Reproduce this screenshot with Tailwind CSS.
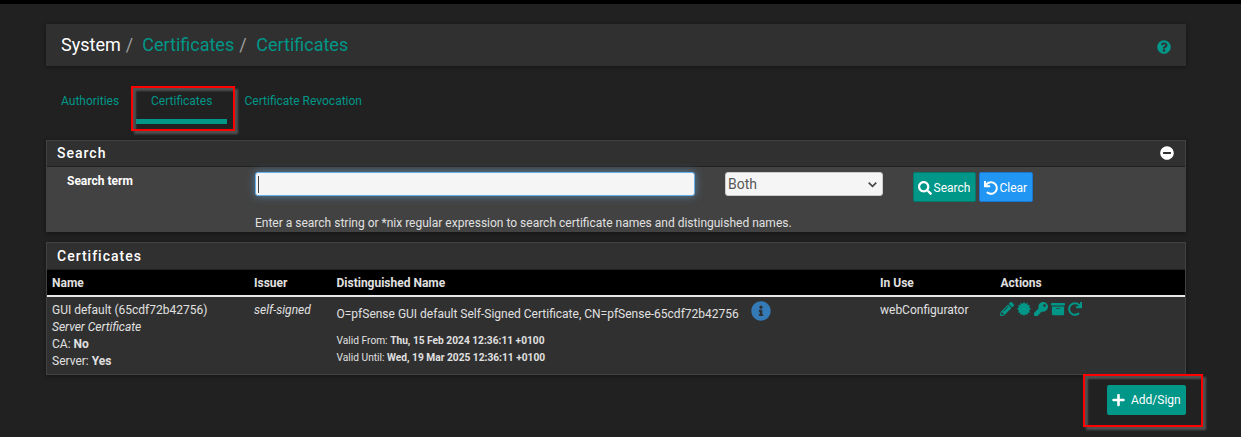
<!DOCTYPE html>
<html lang="en">
<head>
<meta charset="utf-8">
<title>System / Certificates</title>
<script src="https://cdn.jsdelivr.net/npm/@tailwindcss/browser@4"></script>
</head>
<body class="relative h-[437px] overflow-hidden border-t-4 border-black bg-[#212121] font-[Roboto,sans-serif] text-[12px] leading-[17px] text-[#e0e0e0]">
<main class="ml-[46px] w-[1140px] pt-5">
  <header class="flex h-[42px] items-center justify-between bg-[#303030] pr-[15px] pl-[15px] shadow-[0_1px_4px_rgba(0,0,0,0.4)]">
    <ol class="flex text-[18px] leading-[26px] text-[#009688]">
      <li class="text-white">System</li>
      <li class="flex"><span class="w-[21.5px] pl-[5px] text-[#9e9e9e]">/</span>Certificates</li>
      <li class="flex"><span class="w-[22px] pl-[5px] text-[#9e9e9e]">/</span>Certificates</li>
    </ol>
    <svg class="mt-[4px] size-[14px] fill-[#009688]" viewBox="0 0 512 512"><path d="M504 256c0 136.997-111.043 248-248 248S8 392.997 8 256C8 119.083 119.043 8 256 8s248 111.083 248 248zM262.655 90c-54.497 0-89.255 22.957-116.549 63.758-3.536 5.286-2.353 12.415 2.715 16.258l34.699 26.31c5.205 3.947 12.621 3.008 16.665-2.122 17.864-22.658 30.113-35.797 57.303-35.797 20.429 0 45.698 13.148 45.698 32.958 0 14.976-12.363 22.667-32.534 33.976C247.128 238.528 216 254.941 216 296v4c0 6.627 5.373 12 12 12h56c6.627 0 12-5.373 12-12v-1.333c0-28.462 83.186-29.647 83.186-106.667 0-58.002-60.165-102-116.531-102zM256 338c-25.365 0-46 20.635-46 46 0 25.364 20.635 46 46 46s46-20.636 46-46c0-25.364-20.635-46-46-46z"/></svg>
  </header>

  <nav class="mt-[18px] flex h-[40px] text-[#009688]">
    <a class="w-[90px] pt-[9px] pl-[15px]">Authorities</a>
    <a class="w-[91px] border-b-[5px] border-[#009688] pt-[9px] pl-[15px]">Certificates</a>
    <a class="pt-[9px] pl-[17.500px]">Certificate Revocation</a>
  </nav>

  <section class="mt-4 h-[92px] border border-b-0 border-[#424242] bg-[#424242] shadow-[0_1px_4px_rgba(0,0,0,0.4)]">
    <h2 class="flex h-[26px] items-center justify-between border-b border-[#212121] bg-[#303030] pr-[11px] pl-[10px] text-[14px] font-medium tracking-[1px] text-white">Search
      <svg class="mb-px size-[14px] fill-white" viewBox="0 0 512 512"><path d="M256 8C119 8 8 119 8 256s111 248 248 248 248-111 248-248S393 8 256 8zM124 296c-6.600 0-12-5.400-12-12v-56c0-6.600 5.400-12 12-12h264c6.600 0 12 5.400 12 12v56c0 6.600-5.400 12-12 12H124z"/></svg>
    </h2>
    <div class="flex pt-[5px]">
      <label class="w-[208px] pl-5 pt-[1px] font-bold text-white">Search term</label>
      <div class="w-[470px]">
        <div class="flex h-6 w-[440px] items-center rounded-[3px] border border-[#66afe9] bg-[#f5f5f5] pl-[2px] shadow-[0_0_8px_rgba(102,175,233,0.6)]"><span class="h-[17px] w-px bg-[#444]"></span></div>
        <p class="mt-[19px] whitespace-nowrap">Enter a search string or *nix regular expression to search certificate names and distinguished names.</p>
      </div>
      <div class="flex h-6 w-[158px] items-center justify-between rounded-[3px] border border-[#ccc] bg-[#f5f5f5] pr-[5px] pl-[2px] text-[14px] text-[#555]">Both
        <svg class="size-[9px] fill-none stroke-[#444]" viewBox="0 0 9 9"><path stroke-width="1.600" d="M.7 2.600 4.500 6.300 8.300 2.600"/></svg>
      </div>
      <button class="ml-[30px] flex h-[30px] w-[63px] items-center gap-[1.500px] rounded-[2px] border border-[#00796b] bg-[#009688] pt-[2px] pl-1 text-white">
        <svg class="size-[14px] shrink-0 fill-white" viewBox="0 0 512 512"><path d="M505 442.700L405.300 343c-4.500-4.500-10.600-7-17-7H372c27.600-35.300 44-79.700 44-128C416 93.100 322.900 0 208 0S0 93.100 0 208s93.100 208 208 208c48.300 0 92.700-16.400 128-44v16.300c0 6.400 2.500 12.500 7 17l99.700 99.700c9.400 9.400 24.600 9.400 33.900 0l28.300-28.300c9.400-9.400 9.400-24.600.1-34zM208 336c-70.700 0-128-57.200-128-128 0-70.700 57.200-128 128-128 70.700 0 128 57.200 128 128 0 70.700-57.200 128-128 128z"/></svg>Search</button>
      <button class="ml-[3px] flex h-[30px] w-[54px] items-center gap-[1.500px] rounded-[2px] border border-[#1976d2] bg-[#2196f3] pt-[2px] pl-1 text-white">
        <svg class="size-[14px] shrink-0 fill-white" viewBox="0 0 512 512"><path d="M212.333 224.333H12c-6.627 0-12-5.373-12-12V12C0 5.373 5.373 0 12 0h48c6.627 0 12 5.373 12 12v78.112C117.773 39.279 184.260 7.470 258.175 8.007c136.906.994 246.448 111.623 246.157 248.532C504.041 393.258 393.120 504 256.333 504c-64.089 0-122.496-24.313-166.510-64.215-5.099-4.622-5.334-12.554-.467-17.420l33.967-33.967c4.474-4.474 11.662-4.717 16.401-.525C170.760 415.336 211.580 432 256.333 432c97.268 0 176-78.716 176-176 0-97.267-78.716-176-176-176-58.496 0-110.280 28.476-142.274 72.333h98.274c6.627 0 12 5.373 12 12v48c0 6.627-5.373 12-12 12z"/></svg>Clear</button>
    </div>
  </section>

  <section class="mt-[10px] h-[133px] border border-[#424242] bg-[#303030] shadow-[0_1px_4px_rgba(0,0,0,0.4)]">
    <h2 class="flex h-[27px] items-center border-b border-[#212121] pl-[10px] text-[14px] font-medium tracking-[1px] text-white">Certificates</h2>
    <div class="grid h-[27px] grid-cols-[202px_82.500px_543.500px_120.500px_1fr] items-center border-b-2 border-[#e8e8e8] bg-black pt-[2px] pl-[5px] font-bold">
      <span>Name</span><span>Issuer</span><span>Distinguished Name</span><span>In Use</span><span>Actions</span>
    </div>
    <div class="grid grid-cols-[202px_82.500px_543.500px_120px_1fr] pt-[5px] pl-[5px]">
      <div>GUI default (65cdf72b42756)<br><i>Server Certificate</i><br>CA: <b>No</b><br>Server: <b>Yes</b></div>
      <i>self-signed</i>
      <div>
        <div class="flex"><span class="pt-[4px]">O=pfSense GUI default Self-Signed Certificate, CN=pfSense-65cdf72b42756</span>
          <svg class="-mt-px ml-3 size-5 fill-[#337ab7]" viewBox="0 0 512 512"><path d="M256 8C119.043 8 8 119.083 8 256c0 136.997 111.043 248 248 248s248-111.003 248-248C504 119.083 392.957 8 256 8zm0 110c23.196 0 42 18.804 42 42s-18.804 42-42 42-42-18.804-42-42 18.804-42 42-42zm56 254c0 6.627-5.373 12-12 12h-88c-6.627 0-12-5.373-12-12v-24c0-6.627 5.373-12 12-12h12v-64h-12c-6.627 0-12-5.373-12-12v-24c0-6.627 5.373-12 12-12h64c6.627 0 12 5.373 12 12v100h12c6.627 0 12 5.373 12 12v24z"/></svg>
        </div>
        <div class="mt-[9px] text-[10.2px]">Valid From: <b>Thu, 15 Feb 2024 12:36:11 +0100</b><br>Valid Until: <b>Wed, 19 Mar 2025 12:36:11 +0100</b></div>
      </div>
      <span>webConfigurator</span>
      <div class="flex gap-[3px] fill-[#009688]">
        <svg class="size-[14px]" viewBox="0 0 512 512"><path d="M497.900 142.100l-46.100 46.100c-4.700 4.700-12.300 4.700-17 0l-111-111c-4.700-4.700-4.700-12.300 0-17l46.100-46.100c18.700-18.700 49.100-18.700 67.900 0l60.100 60.100c18.800 18.700 18.800 49.100 0 67.900zM284.200 99.800L21.600 362.400.4 483.900c-2.900 16.400 11.400 30.600 27.800 27.800l121.500-21.300 262.600-262.600c4.700-4.700 4.700-12.300 0-17l-111-111c-4.800-4.700-12.400-4.700-17.100 0zM124.100 339.900c-5.500-5.500-5.500-14.300 0-19.800l154-154c5.500-5.500 14.300-5.500 19.800 0s5.500 14.300 0 19.800l-154 154c-5.500 5.500-14.300 5.500-19.800 0zM88 424h48v36.300l-64.500 11.300-31.100-31.100L51.700 376H88v48z"/></svg>
        <svg class="size-[14px]" viewBox="0 0 512 512"><path d="M512 256 444.400 306.500 478 384 393.900 393.900 384 478 306.500 444.400 256 512 205.500 444.400 128 478 118.100 393.900 34 384 67.600 306.500 0 256 67.600 205.500 34 128 118.100 118.100 128 34 205.500 67.600 256 0 306.500 67.600 384 34 393.900 118.100 478 128 444.400 205.500z"/></svg>
        <svg class="size-[14px]" viewBox="0 0 512 512"><path d="M512 176.001C512 273.203 433.202 352 336 352c-11.220 0-22.190-1.062-32.827-3.069l-24.012 27.014A23.999 23.999 0 0 1 261.223 384H224v40c0 13.255-10.745 24-24 24h-40v40c0 13.255-10.745 24-24 24H24c-13.255 0-24-10.745-24-24v-78.059c0-6.365 2.529-12.470 7.029-16.971l161.802-161.802C163.108 213.814 160 195.271 160 176 160 78.798 238.797.001 335.999 0 433.488-.001 512 78.511 512 176.001zM336 128c0 26.510 21.490 48 48 48s48-21.490 48-48-21.490-48-48-48-48 21.490-48 48z"/></svg>
        <svg class="size-[14px]" viewBox="0 0 512 512"><path d="M32 448c0 17.700 14.300 32 32 32h384c17.700 0 32-14.300 32-32V160H32v288zm160-212c0-6.600 5.400-12 12-12h104c6.600 0 12 5.400 12 12v8c0 6.600-5.400 12-12 12H204c-6.600 0-12-5.400-12-12v-8zM480 32H32C14.300 32 0 46.300 0 64v48c0 8.800 7.200 16 16 16h480c8.800 0 16-7.200 16-16V64c0-17.700-14.300-32-32-32z"/></svg>
        <svg class="size-[14px] -scale-x-100" viewBox="0 0 512 512"><path d="M212.333 224.333H12c-6.627 0-12-5.373-12-12V12C0 5.373 5.373 0 12 0h48c6.627 0 12 5.373 12 12v78.112C117.773 39.279 184.260 7.470 258.175 8.007c136.906.994 246.448 111.623 246.157 248.532C504.041 393.258 393.120 504 256.333 504c-64.089 0-122.496-24.313-166.510-64.215-5.099-4.622-5.334-12.554-.467-17.420l33.967-33.967c4.474-4.474 11.662-4.717 16.401-.525C170.760 415.336 211.580 432 256.333 432c97.268 0 176-78.716 176-176 0-97.267-78.716-176-176-176-58.496 0-110.280 28.476-142.274 72.333h98.274c6.627 0 12 5.373 12 12v48c0 6.627-5.373 12-12 12z"/></svg>
      </div>
    </div>
  </section>

  <div class="mt-[10px] flex justify-end">
    <button class="flex h-[30px] w-[79px] items-center rounded-[2px] bg-[#009688] pl-[5px] text-white">
      <svg class="mr-[6px] h-[14px] w-[13px] shrink-0 fill-white" viewBox="0 0 448 512"><path d="M416 208H272V64c0-17.670-14.330-32-32-32h-32c-17.670 0-32 14.330-32 32v144H32c-17.670 0-32 14.330-32 32v32c0 17.670 14.330 32 32 32h144v144c0 17.670 14.330 32 32 32h32c17.670 0 32-14.330 32-32V304h144c17.670 0 32-14.330 32-32v-32c0-17.670-14.330-32-32-32z"/></svg>Add/Sign</button>
  </div>
</main>
<div class="absolute top-[82px] left-[131px] h-[45px] w-[104px] border-2 border-[#f00] shadow-[3px_3px_2px_rgba(120,120,120,0.55),inset_3px_3px_2px_rgba(120,120,120,0.55)]"></div>
<div class="absolute top-[370px] left-[1083px] h-[53px] w-[120px] border-2 border-[#f00] shadow-[3px_3px_2px_rgba(120,120,120,0.55),inset_3px_3px_2px_rgba(120,120,120,0.55)]"></div>
</body>
</html>
